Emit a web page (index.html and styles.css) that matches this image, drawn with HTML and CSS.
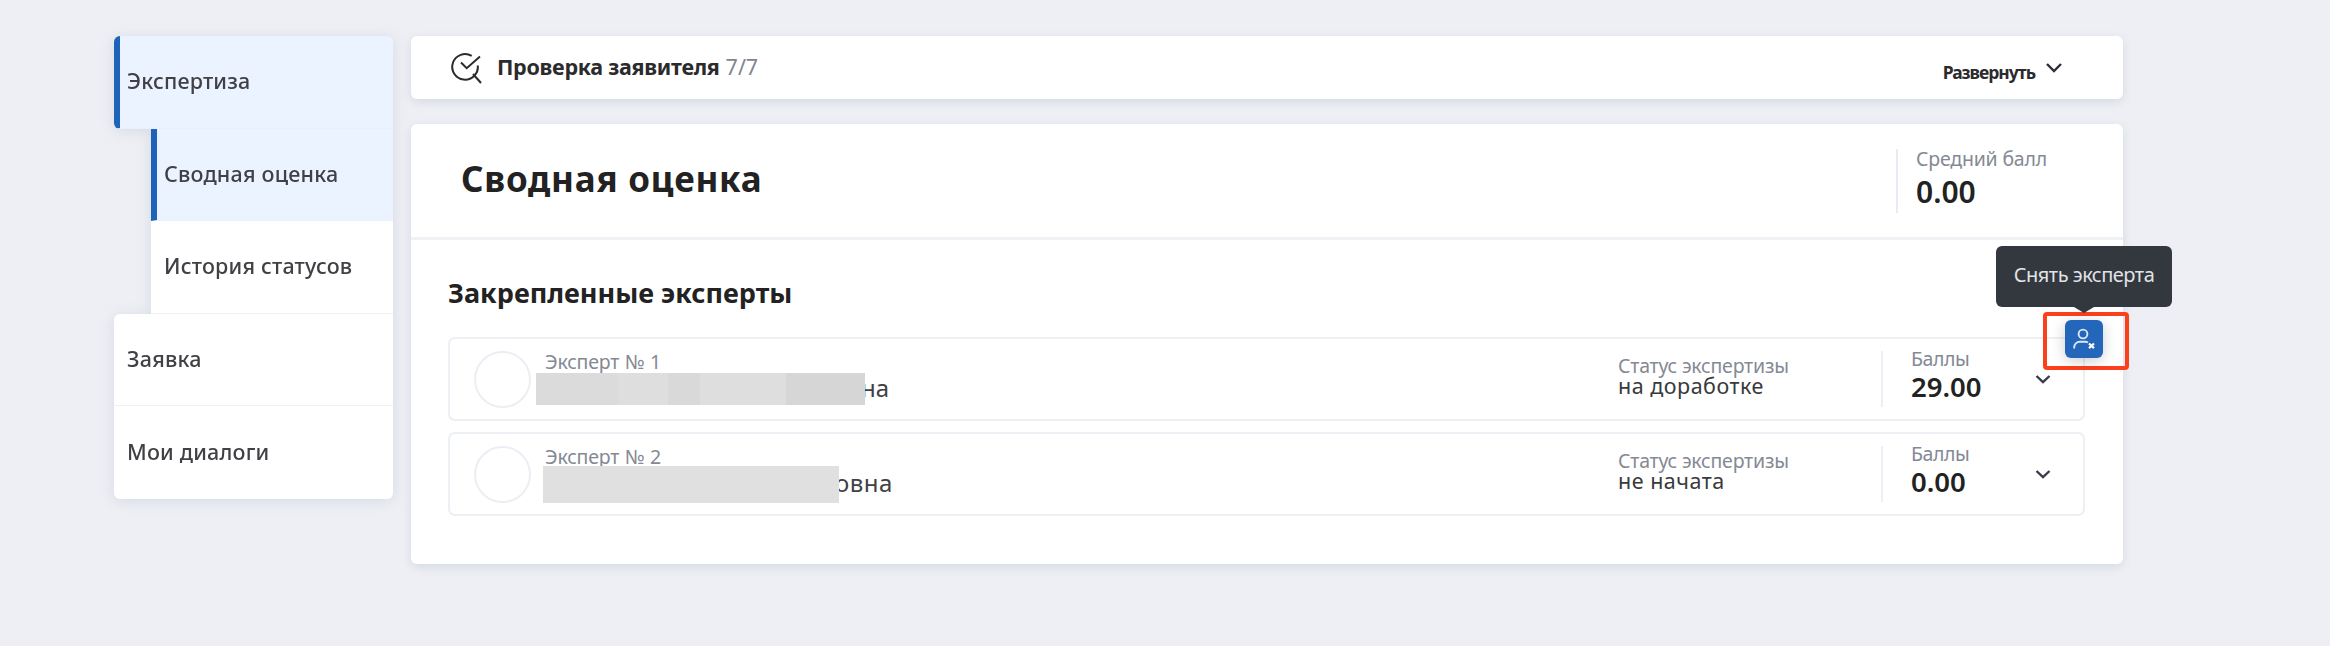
FILE: index.html
```
<!DOCTYPE html>
<html lang="ru">
<head>
<meta charset="utf-8">
<title>Сводная оценка</title>
<link rel="stylesheet" href="styles.css">
</head>
<body>
<div class="page">
  <nav class="sidebar">
    <a class="nav-item nav-active nav-first">Экспертиза</a>
    <a class="nav-item nav-sub nav-active">Сводная оценка</a>
    <a class="nav-item nav-sub">История статусов</a>
    <a class="nav-item nav-root">Заявка</a>
    <a class="nav-item nav-last">Мои диалоги</a>
  </nav>
  <main class="content">
    <section class="card check">
      <svg width="34" height="34" viewBox="0 0 34 34" fill="none" stroke="#2b2b2d" stroke-width="2"><path d="M22.700 4.900A12.800 12.800 0 1 0 28.800 14.500"/><path d="M12 11.500l5.700 5.700L31 5.500"/><path d="M24 23l8 9"/></svg>
      <h2 class="check-title">Проверка заявителя</h2>
      <span class="check-count">7/7</span>
      <button class="expand"><span>Развернуть</span><svg width="18" height="12" viewBox="0 0 18 12" fill="none" stroke="#2c2f3a" stroke-width="2.400"><path d="M2 2l7 7 7-7"/></svg></button>
    </section>
    <section class="card summary">
      <header class="summary-head">
        <h1 class="title">Сводная оценка</h1>
        <div class="average"><span class="label average-label">Средний балл</span><strong class="average-value">0.00</strong></div>
      </header>
      <div class="experts">
        <h3 class="experts-title">Закрепленные эксперты</h3>
        <article class="row">
          <span class="avatar"></span>
          <div class="person"><span class="label person-label">Эксперт № 1</span><div class="name-line"><i class="mask mask-one"></i><span class="name-tail">на</span></div></div>
          <div class="status"><span class="label status-label">Статус экспертизы</span><span class="status-value">на доработке</span></div>
          <div class="score"><span class="label score-label">Баллы</span><strong class="score-value">29.00</strong></div>
          <svg class="chev" width="16" height="12" viewBox="0 0 16 12" fill="none" stroke="#3b3b4d" stroke-width="2.400"><path d="M1.500 2l6.500 6.200L14.500 2"/></svg>
          <span class="highlight"></span>
          <button class="remove" aria-label="Снять эксперта"><svg width="24" height="24" viewBox="0 0 24 24" fill="none" stroke="#d9e7f8" stroke-width="1.900"><circle cx="11" cy="7" r="4.400"/><path d="M2.200 21.500v-1.200a5.600 5.600 0 0 1 5.600-5.600H13a5.600 5.600 0 0 1 3 .8"/><path d="M17 16.500l5 4.600m0-4.600l-5 4.600" stroke="#fff" stroke-width="2.200"/></svg></button>
          <div class="tooltip">Снять эксперта</div>
        </article>
        <article class="row">
          <span class="avatar"></span>
          <div class="person"><span class="label person-label">Эксперт № 2</span><div class="name-line"><i class="mask mask-two"></i><span class="name-tail name-tail-long">овна</span></div></div>
          <div class="status"><span class="label status-label">Статус экспертизы</span><span class="status-value">не начата</span></div>
          <div class="score"><span class="label score-label">Баллы</span><strong class="score-value">0.00</strong></div>
          <svg class="chev" width="16" height="12" viewBox="0 0 16 12" fill="none" stroke="#3b3b4d" stroke-width="2.400"><path d="M1.500 2l6.500 6.200L14.500 2"/></svg>
        </article>
      </div>
    </section>
  </main>
</div>
</body>
</html>
```
FILE: styles.css
```
* { box-sizing: border-box; }
body { margin: 0; background: #edeff4; color: #414145; font-family: "Noto Sans", "Open Sans", sans-serif; }
h1, h2, h3 { margin: 0; }
button { border: 0; padding: 0; background: none; font: inherit; color: inherit; }
.page { display: flex; align-items: flex-start; gap: 18px; width: 2330px; height: 646px; padding: 36px 0 0 114px; overflow: hidden; }

.sidebar { display: flex; flex-direction: column; width: 279px; filter: drop-shadow(0 2px 7px rgba(100, 115, 150, .16)); }
.nav-item { display: flex; align-items: center; height: 92.6px; padding: 0 0 2px 13px; background: #fff; font-size: 21.5px; font-weight: 500; letter-spacing: .2px; border-bottom: 1px solid #eef1f6; white-space: nowrap; }
.nav-sub { margin-left: 37px; }
.nav-active { padding-left: 7px; border-left: 6px solid #1d63b8; border-bottom-color: #e8f0fb; background: #eaf3ff; }
.nav-first { border-radius: 6px 6px 0 6px; }
.nav-root { border-top-left-radius: 6px; }
.nav-last { border-bottom: 0; border-radius: 0 0 6px 6px; }

.content { width: 1712px; }
.card { background: #fff; border-radius: 6px; box-shadow: 0 3px 10px rgba(80, 90, 120, .14); }
.check { display: flex; align-items: center; height: 63px; padding: 0 60px 0 38px; margin-bottom: 25px; }
.check-title { margin: 0 0 1px 14px; font-size: 21.5px; line-height: 60px; letter-spacing: -.27px; color: #2b2b2d; }
.check-count { margin: 0 0 1px 6px; font-size: 21.5px; line-height: 60px; color: #82858f; }
.expand { display: flex; align-items: center; gap: 10px; margin-left: auto; font-size: 17.5px; font-weight: 700; line-height: 24px; letter-spacing: -1px; color: #2b2b2d; }
.expand span { padding-top: 8px; }

.summary { height: 440px; }
.summary-head { display: flex; justify-content: space-between; height: 116px; padding: 25px 77px 0 50px; border-bottom: 3px solid #eff1f4; }
.title { font-size: 35px; line-height: 60px; letter-spacing: .75px; color: #222; }
.average { display: flex; flex-direction: column; width: 150px; height: 64px; padding-left: 18px; border-left: 2px solid #e9eaf3; }
.label { font-size: 19.5px; line-height: 24px; letter-spacing: -.2px; color: #858994; white-space: nowrap; }
.average-label { line-height: 20px; }
.average-value { font-size: 30px; line-height: 45px; font-weight: 600; color: #222; }

.experts { padding: 35px 38px 0 37px; }
.experts-title { font-size: 27px; line-height: 36px; color: #222; margin-bottom: 26px; }
.row { position: relative; display: flex; width: 1637px; height: 84px; padding: 12px 0; margin-bottom: 11px; border: 2px solid #eceff4; border-radius: 7px; }
.avatar { width: 57px; height: 57px; margin-left: 24px; border: 2px solid #eceef4; border-radius: 50%; }
.person { display: flex; flex-direction: column; width: 1087px; padding-left: 14px; }
.person-label { line-height: 21px; letter-spacing: -.2px; word-spacing: .8px; }
.name-line { display: flex; align-items: flex-start; margin-left: -9px; }
.name-tail { margin-left: -4px; font-size: 24px; line-height: 31px; }
.name-tail-long { letter-spacing: .5px; }
.mask { position: relative; z-index: 1; flex: none; }
.mask-one { width: 329px; height: 32px; margin-top: 1px; background: linear-gradient(90deg, #dbdbdb 25%, #dedede 25% 40%, #d9d9d9 40% 50%, #dedede 50% 76%, #d6d6d6 76%); }
.mask-two { width: 296px; height: 37px; margin: -1px 0 0 7px; background: #e0e0e0; }
.status { display: flex; flex-direction: column; width: 263px; padding-top: 4px; }
.status-label { line-height: 21px; }
.status-value { font-size: 21.5px; line-height: 20px; letter-spacing: .5px; color: #39393c; }
.score { display: flex; flex-direction: column; height: 56px; width: 124px; padding-left: 28px; border-left: 2px solid #eeeff6; }
.score-label { line-height: 16px; letter-spacing: -.4px; }
.score-value { font-size: 27.5px; line-height: 39px; font-weight: 600; color: #222; }
.chev { margin: 23px 0 0 30px; }

.remove { position: absolute; left: 1615px; top: -19px; display: grid; place-items: center; width: 38px; height: 38px; border-radius: 6px; background: #2466ba; box-shadow: 0 3px 14px rgba(0, 0, 0, .2); }
.highlight { position: absolute; left: 1593px; top: -27px; width: 86px; height: 58px; border: 4px solid #fb401c; border-radius: 4px; }
.tooltip { position: absolute; left: 1546px; top: -93px; width: 176px; height: 61px; border-radius: 6px; background: #33373e; color: #e2e3e6; text-align: center; font-size: 20px; line-height: 58px; letter-spacing: -.5px; white-space: nowrap; }
.tooltip::after { content: ""; position: absolute; left: 78px; top: 61px; border: solid transparent; border-width: 6px 10px 0; border-top-color: #33373e; }
```
